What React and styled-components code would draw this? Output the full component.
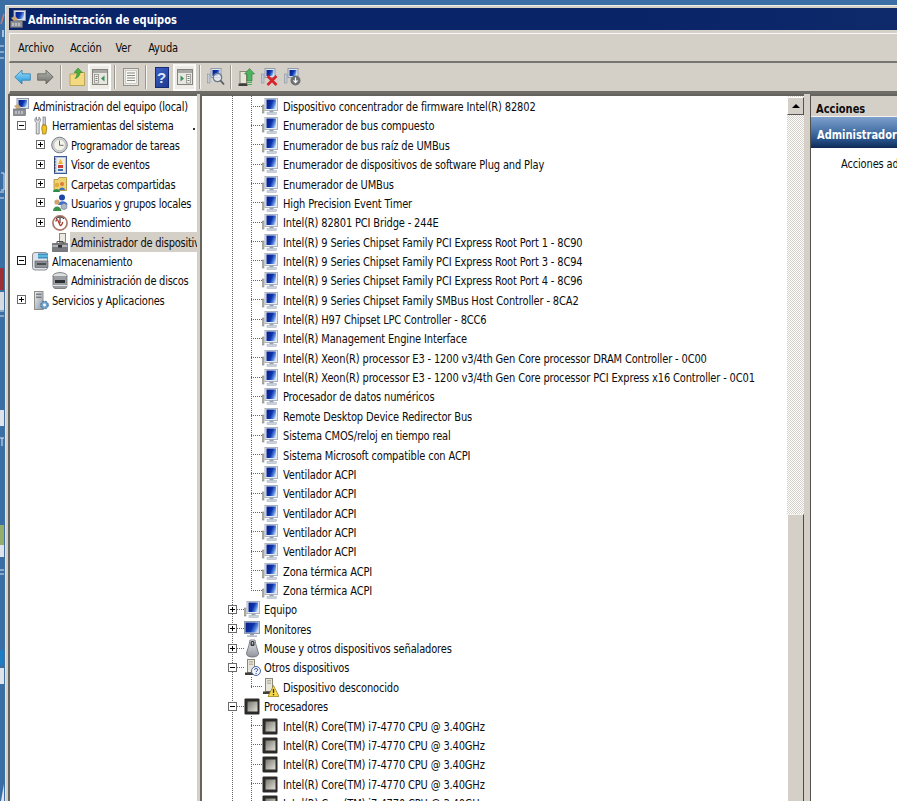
import React from "react";
import styled, { createGlobalStyle, css } from "styled-components";

const FONT = `"DejaVu Sans Condensed", "DejaVu Sans", "Liberation Sans", sans-serif`;
const ROW = "19.365px";

const Global = createGlobalStyle`
  html, body { margin: 0; padding: 0; background: #3b6ea5; }
  body { font-family: ${FONT}; font-size: 11px; color: #0c0c0c; overflow: hidden; }
`;

const tall = css`
  display: inline-block;
  font-size: 11px;
  line-height: 14px;
  letter-spacing: -0.15px;
  transform: translateY(1.5px) scaleY(1.16);
`;

const Page = styled.div`
  display: flex;
  width: 897px;
  height: 801px;
  overflow: hidden;
  background: #3b6ea5;
`;
const DesktopEdge = styled.svg`
  flex: none;
  width: 5px;
  height: 801px;
`;
const Win = styled.div`
  flex: 1;
  min-width: 0;
  margin-top: 5px;
  display: flex;
  flex-direction: column;
  background: #d4d0c8;
  border-top: 1px solid #f2f1ec;
  border-left: 1px solid #e8e6e0;
`;
const TitleBar = styled.div`
  flex: none;
  height: 22px;
  margin-top: 2px;
  margin-left: 3px;
  display: flex;
  align-items: center;
  gap: 2px;
  padding-left: 1px;
  background: linear-gradient(90deg, #0a246a, #0a2468 70%, #0e2a6a);
  color: #fff;
`;
const TitleText = styled.span`
  ${tall}
  letter-spacing: 0;
  font-weight: 700;
`;
const MenuBar = styled.div`
  flex: none;
  height: 27px;
  margin-top: 3px;
  margin-left: 3px;
  display: flex;
  align-items: center;
  padding-left: 8px;
  border-top: 1px solid #fbfaf7;
  border-left: 1px solid #f4f3ef;
  border-bottom: 2px solid #77756f;
`;
const MenuItem = styled.span`
  ${tall}
  transform: translateY(0.5px) scaleY(1.16);
  margin-right: ${(p) => p.$gap}px;
`;
const ToolBar = styled.div`
  flex: none;
  height: 28px;
  margin-left: 3px;
  display: flex;
  align-items: center;
  padding-left: 1px;
  border-left: 1px solid #f4f3ef;
  border-bottom: 3px solid #6f6d68;
`;
const ToolBtn = styled.div`
  flex: none;
  width: 23px;
  height: 27px;
  display: flex;
  align-items: center;
  justify-content: center;
  box-sizing: border-box;
  ${(p) => p.$on && `background:#ecebe6; border:2px solid #fbfbf9; border-top-color:#f7f7f3;`}
`;
const ToolSep = styled.div`
  flex: none;
  width: 1px;
  height: 24px;
  margin: 0 4px 0 3px;
  background: #9a9892;
  box-shadow: 1px 0 0 #f6f5f1;
`;
const Panes = styled.div`
  flex: 1;
  min-height: 0;
  display: flex;
  padding-left: 2px;
`;
const TreePane = styled.div`
  flex: none;
  width: 187px;
  overflow: hidden;
  padding-top: 0.4px;
  background: #fff;
  border-left: 2px solid #66645f;
  border-top: 2px solid #66645f;
`;
const CenterPane = styled.div`
  flex: none;
  width: 602px;
  margin-left: 3px;
  display: flex;
  overflow: hidden;
  background: #fff;
  border-left: 2px solid #66645f;
  border-top: 2px solid #66645f;
`;
const DeviceList = styled.div`
  flex: 1;
  min-width: 0;
  height: 720px;
  padding-top: 0.4px;
  background-image: repeating-linear-gradient(180deg, #666 0 1px, transparent 1px 2px);
  background-size: 1px 100%;
  background-position: 30px 0;
  background-repeat: no-repeat;
`;
const Children = styled.div`
  background-image: repeating-linear-gradient(180deg, #666 0 1px, transparent 1px 2px);
  background-size: 1px calc(100% - 9px);
  background-position: 49px 0;
  background-repeat: no-repeat;
`;
const Row = styled.div`
  display: flex;
  align-items: center;
  height: ${ROW};
  padding-left: ${(p) => p.$pad}px;
  white-space: nowrap;
`;
const Expander = styled.span`
  flex: none;
  box-sizing: border-box;
  width: 9px;
  height: 9px;
  position: relative;
  background: #fff;
  border: 1px solid ${(p) => (p.$strong ? "#222" : "#6b6b6b")};
  &::before {
    content: "";
    position: absolute;
    left: 1px;
    right: 1px;
    top: 3px;
    height: 1px;
    background: #000;
  }
  &::after {
    content: "";
    display: ${(p) => (p.$open ? "none" : "block")};
    position: absolute;
    top: 1px;
    bottom: 1px;
    left: 3px;
    width: 1px;
    background: #000;
  }
`;
const Stub = styled.span`
  flex: none;
  width: ${(p) => p.$w}px;
  height: 1px;
  background-image: repeating-linear-gradient(90deg, #666 0 1px, transparent 1px 2px);
`;
const IconSlot = styled.span`
  flex: none;
  width: ${(p) => p.$w}px;
  display: flex;
  justify-content: center;
  padding-top: 1px;
`;
const Glyph = styled.svg`
  flex: none;
  display: block;
`;
const Label = styled.span`
  ${tall}
  margin-left: ${(p) => p.$gap ?? 4}px;
`;
const TreeLabel = styled(Label)`
  letter-spacing: -0.25px;
`;
const SelLabel = styled.span`
  flex: 1;
  min-width: 0;
  overflow: hidden;
  margin-left: 3px;
  height: 20px;
  display: flex;
  align-items: center;
  padding-left: 1px;
  background: #d4d0c8;
`;
const SelText = styled.span`
  ${tall}
  letter-spacing: -0.25px;
`;
const Spacer = styled.span`
  flex: none;
  width: ${(p) => p.$w}px;
`;
const StrayDot = styled.span`
  flex: none;
  width: 2px;
  height: 2px;
  margin: 8px 2px 0 auto;
  background: #333;
`;
const ScrollBar = styled.div`
  flex: none;
  width: 17px;
  display: flex;
  flex-direction: column;
  background-color: #fff;
  background-image: conic-gradient(#d4d0c8 25%, #fff 0 50%, #d4d0c8 0 75%, #fff 0);
  background-size: 2px 2px;
`;
const ScrollUp = styled.div`
  flex: none;
  height: 18px;
  margin-top: 1px;
  display: flex;
  align-items: center;
  justify-content: center;
  background: #d4d0c8;
  box-sizing: border-box;
  border: 1px solid #fff;
  border-right-color: #55534f;
  border-bottom-color: #55534f;
  &::before {
    content: "";
    border: 4px solid transparent;
    border-top: 0;
    border-bottom: 4px solid #000;
  }
`;
const ScrollGap = styled.div`
  flex: none;
  height: 399px;
`;
const ScrollThumb = styled.div`
  flex: 1;
  background: #d4d0c8;
  box-sizing: border-box;
  border-left: 1px solid #fff;
  border-top: 1px solid #f2f1ec;
  border-right: 1px solid #4b4a47;
`;
const ActionsPane = styled.div`
  flex: 1;
  min-width: 0;
  margin-left: 6px;
  overflow: hidden;
  background: #fff;
  border-left: 1px solid #55534f;
  border-top: 2px solid #66645f;
`;
const ActionsHead = styled.div`
  box-sizing: border-box;
  height: 21px;
  display: flex;
  align-items: center;
  padding: 4px 0 0 5px;
  background: #d4d0c8;
  border-bottom: 1px solid #f4f3ef;
`;
const BoldText = styled.span`
  ${tall}
  letter-spacing: 0;
  font-weight: 700;
`;
const ActionsBand = styled.div`
  box-sizing: border-box;
  height: 31px;
  display: flex;
  align-items: center;
  padding: 2px 0 0 6px;
  white-space: nowrap;
  color: #fff;
  background: linear-gradient(180deg, #7ea0cc 0%, #4f79ac 40%, #264f86 75%, #0d2a55 100%);
`;
const ActionsNote = styled.div`
  padding: 8px 0 0 30px;
  white-space: nowrap;
`;
const NoteText = styled.span`
  ${tall}
`;
const HelpBox = styled.div`
  width: 14px;
  height: 21px;
  background: linear-gradient(135deg, #3c61c4, #1d3a92);
  border: 1px solid #152c72;
  box-sizing: border-box;
  color: #dfe7ff;
  font: 700 15px/19px "Liberation Sans", sans-serif;
  text-align: center;
`;

const Icon = ({ w = 16, h = 16, children }) => (
  <Glyph width={w} height={h} viewBox={`0 0 ${w} ${h}`}>
    {children}
  </Glyph>
);

const Defs = () => (
  <svg width="0" height="0" style={{ position: "absolute" }}>
    <defs>
      <linearGradient id="scr" x1="0" y1="0.3" x2="1" y2="0.7">
        <stop offset="0" stopColor="#0a1f8c" />
        <stop offset="0.5" stopColor="#0d35ac" />
        <stop offset="0.8" stopColor="#5c8ce0" />
        <stop offset="1" stopColor="#cfe0f8" />
      </linearGradient>
      <linearGradient id="arrowBlue" x1="0" y1="0" x2="0" y2="1">
        <stop offset="0" stopColor="#9fe0fb" />
        <stop offset="1" stopColor="#1f93d8" />
      </linearGradient>
      <linearGradient id="arrowGray" x1="0" y1="0" x2="0" y2="1">
        <stop offset="0" stopColor="#b5b5b0" />
        <stop offset="1" stopColor="#6f6f6c" />
      </linearGradient>
      <linearGradient id="chip" x1="0" y1="0" x2="1" y2="1">
        <stop offset="0" stopColor="#77776f" />
        <stop offset="1" stopColor="#e2e2dc" />
      </linearGradient>
      <linearGradient id="metal" x1="0" y1="0" x2="0" y2="1">
        <stop offset="0" stopColor="#e4e6ea" />
        <stop offset="1" stopColor="#8f949c" />
      </linearGradient>
      <linearGradient id="tower" x1="0" y1="0" x2="1" y2="1">
        <stop offset="0" stopColor="#eef0f3" />
        <stop offset="1" stopColor="#8d97a6" />
      </linearGradient>
    </defs>
  </svg>
);

const Monitor = () => (
  <Icon w={16} h={17}>
    <rect x="0" y="7" width="2" height="8" fill="#bfb9a4" stroke="#6f7580" strokeWidth=".5" />
    <rect x="3" y="0.500" width="12.500" height="12" fill="#e8ebf0" stroke="#aab3c1" />
    <rect x="4.500" y="1.500" width="9.500" height="9.500" fill="url(#scr)" />
    <rect x="7.500" y="12.500" width="4" height="2" fill="#98a2b2" />
    <rect x="5" y="14.500" width="9.500" height="2" fill="#ccd3dd" stroke="#a5aebb" strokeWidth=".5" />
  </Icon>
);
const BigMonitor = () => (
  <Icon w={16} h={16}>
    <rect x="0.500" y="0.500" width="15" height="12" fill="#cfd5de" stroke="#8f9bab" />
    <rect x="1.500" y="1.500" width="13" height="10" fill="url(#scr)" />
    <rect x="6" y="12.500" width="4" height="2" fill="#8e98a8" />
    <rect x="3" y="14.300" width="10" height="1.700" fill="#b9c0cc" />
  </Icon>
);
const Chip = () => (
  <Icon w={16} h={17}>
    <rect x="0.500" y="0.500" width="15" height="16" rx="1" fill="#2b2a28" />
    <rect x="3.500" y="3.500" width="10" height="10" fill="url(#chip)" />
  </Icon>
);
const MouseDev = () => (
  <Icon w={15} h={19}>
    <path d="M5 1h5l1 5 2.500 8c.3 2.500-2 4-6 4s-6.300-1.500-6-4L4 6z" fill="url(#metal)" stroke="#666a70" strokeWidth=".8" />
    <rect x="5.500" y="2" width="4" height="5" rx="1.500" fill="#2e2f33" />
    <rect x="6.800" y="3" width="1.400" height="2.500" fill="#bfc3c8" />
  </Icon>
);
const Tower = () => (
  <g>
    <rect x="3.500" y="0.500" width="7" height="13" fill="#e8e6da" stroke="#8a8878" />
    <rect x="5" y="2" width="4" height="1.500" fill="#b8b5a4" />
    <rect x="5" y="4.500" width="4" height="1.500" fill="#b8b5a4" />
    <rect x="1" y="13.500" width="9" height="2.500" fill="#3f3e3a" />
  </g>
);
const UnknownDev = () => (
  <Icon w={17} h={17}>
    <Tower />
    <circle cx="12" cy="12" r="4.500" fill="#f5f6fa" stroke="#4a62a8" />
    <path d="M10.400 10.800c.3-1.700 3.400-1.700 3.300 0 0 1.200-1.600 1.100-1.600 2.300M12.100 14.100v.9" stroke="#1c3f9c" strokeWidth="1" fill="none" />
  </Icon>
);
const WarnDev = () => (
  <Icon w={17} h={19}>
    <Tower />
    <path d="M11.500 7.500L17 18.500H6z" fill="#f7d84a" stroke="#9c8420" strokeWidth=".8" />
    <path d="M11.500 11v4M11.500 16v1.300" stroke="#2b2b20" strokeWidth="1.300" />
  </Icon>
);

const ConsoleRoot = () => (
  <Icon w={16} h={18}>
    <rect x="4" y="0.500" width="11.500" height="10" fill="#dde2ea" stroke="#8f9bab" />
    <rect x="5.500" y="2" width="8.500" height="7" fill="url(#scr)" />
    <path d="M1 8l4-2 3 3-3 3z" fill="#c9aa7a" />
    <rect x="0.500" y="11" width="12" height="6.500" fill="#8d9096" stroke="#5f6166" strokeWidth=".6" />
    <path d="M3 13v3M6 13v3M9 13v3" stroke="#e6e6e6" />
  </Icon>
);
const Tools = () => (
  <Icon w={14} h={19}>
    <path d="M2.500 1c-2.200 1.500-2 4.500-.3 5.500V18h3V6.500c1.700-1 1.900-4 -.3-5.500V4H2.500z" fill="#d9dbde" stroke="#6b6e72" strokeWidth=".7" />
    <rect x="9" y="1" width="2.500" height="8" fill="#c9ccd0" stroke="#6b6e72" strokeWidth=".6" />
    <path d="M8.500 9h3.500l.8 3-1 6H8.700l-1-6z" fill="#f2c21f" stroke="#8d6d08" strokeWidth=".7" />
  </Icon>
);
const Clock = () => (
  <Icon w={17} h={18}>
    <circle cx="8.500" cy="9" r="7.800" fill="#cfd2d6" stroke="#7c7f84" />
    <circle cx="8.500" cy="9" r="5.800" fill="#f4f3ea" stroke="#a7a9ad" strokeWidth=".6" />
    <path d="M8.500 4.500V9.300H12.500" stroke="#6a6c70" strokeWidth="1" fill="none" />
  </Icon>
);
const EventLog = () => (
  <Icon w={14} h={18}>
    <rect x="1.500" y="0.500" width="12" height="17" fill="#b9c7e0" stroke="#3f5a94" />
    <rect x="3.500" y="2" width="8.500" height="14" fill="#f0eee6" />
    <path d="M7.500 3l2.500 5h-5z" fill="#e9b934" />
    <rect x="5" y="9" width="5" height="3" fill="#c54036" />
    <rect x="5" y="13" width="5" height="2" fill="#3a6fb0" />
    <path d="M1 3h1.500M1 6h1.500M1 9h1.500M1 12h1.500M1 15h1.500" stroke="#222" />
  </Icon>
);
const SharedFolder = () => (
  <Icon w={16} h={18}>
    <path d="M2 4.500h4l1-2h7.500v13H2z" fill="#efd272" stroke="#a98a2c" strokeWidth=".8" />
    <circle cx="5" cy="10" r="2.200" fill="#e3a93b" />
    <path d="M1 17c0-4 7-4 7 0z" fill="#2c8c4a" />
    <circle cx="10" cy="9" r="2" fill="#d97b3a" />
    <path d="M7 15c0-3.500 6-3.500 6 0z" fill="#3f74b8" />
  </Icon>
);
const Users = () => (
  <Icon w={16} h={18}>
    <circle cx="10" cy="3.500" r="3" fill="#1f46a6" />
    <path d="M6 11c0-5 9-5 9.500 0z" fill="#3a6fd0" />
    <circle cx="5" cy="8" r="2.600" fill="#d0a270" />
    <path d="M1 17c0-6 8-6 8.500 0z" fill="#3d8f4d" />
    <circle cx="12" cy="12.500" r="3" fill="#aeb9c7" stroke="#6b7686" strokeWidth=".6" />
  </Icon>
);
const Perf = () => (
  <Icon w={16} h={18}>
    <circle cx="8" cy="9" r="7.100" fill="#fff" stroke="#a9766a" strokeWidth="1.700" />
    <path d="M3.800 7.500c1-4 2.500-1 3.500 2s2 3 3.500-1.500" stroke="#b1301f" strokeWidth="1.300" fill="none" />
    <path d="M4 5c2-2.500 6-2.500 8 0M8 4v5" stroke="#1f1f1f" strokeWidth="1" fill="none" />
  </Icon>
);
const DevMgr = () => (
  <Icon w={16} h={19}>
    <rect x="7.500" y="0.500" width="6" height="9" fill="#eceae0" stroke="#8a8878" />
    <path d="M0.500 10.500h15v8h-15z" fill="#777b80" stroke="#47494c" strokeWidth=".6" />
    <path d="M0.500 13h15" stroke="#d7d9dc" strokeWidth="1.200" />
    <rect x="6" y="12" width="4" height="2.500" fill="#2f3033" />
    <path d="M5 10.500V8.500h6v2" fill="none" stroke="#47494c" />
  </Icon>
);
const Storage = () => (
  <Icon w={17} h={19}>
    <rect x="0.500" y="0.500" width="15" height="17.500" rx="2.500" fill="#dfe2e6" stroke="#8a8e94" />
    <rect x="6" y="1.500" width="10" height="5" fill="#3c8fc4" />
    <path d="M6 4h10" stroke="#7fe0e8" />
    <rect x="3" y="9" width="13" height="6.500" fill="#8d9298" stroke="#55585c" strokeWidth=".6" />
    <path d="M5 12h9" stroke="#2e3033" strokeWidth="1.400" />
  </Icon>
);
const Disk = () => (
  <Icon w={16} h={17}>
    <ellipse cx="8" cy="3.800" rx="7" ry="3.200" fill="#dcdedf" stroke="#7e8185" />
    <path d="M1 4v9.500c0 1.500 1 3 2 3h10c1 0 2-1.500 2-3V4" fill="#9a9da1" stroke="#5f6266" strokeWidth=".7" />
    <rect x="3" y="8" width="10" height="3" fill="#2f3033" />
    <path d="M1 13.500h14" stroke="#e3e4e6" />
  </Icon>
);
const Services = () => (
  <Icon w={16} h={19}>
    <rect x="1.500" y="0.500" width="8.500" height="18" fill="url(#tower)" stroke="#8f8f88" />
    <rect x="3" y="2.500" width="5.500" height="1.600" fill="#7b7d80" />
    <rect x="3" y="5.500" width="5.500" height="1.600" fill="#7b7d80" />
    <circle cx="11.500" cy="14" r="3.800" fill="#6fa4cf" stroke="#3f6c92" strokeDasharray="2 1" />
    <circle cx="11.500" cy="14" r="1.400" fill="#fff" />
  </Icon>
);

const BackArrow = () => (
  <Icon w={17} h={16}>
    <path d="M0.800 8L8 1v3.800h8.300v6.400H8V15z" fill="url(#arrowBlue)" stroke="#2f7fb3" strokeWidth=".8" />
  </Icon>
);
const FwdArrow = () => (
  <Icon w={17} h={16}>
    <path d="M16.200 8L9 1v3.800H.7v6.400H9V15z" fill="url(#arrowGray)" stroke="#5f5f5c" strokeWidth=".8" />
  </Icon>
);
const UpFolder = () => (
  <Icon w={16} h={18}>
    <path d="M1 6h5l1-1.500h8.500V17.500H1z" fill="#f3da82" stroke="#b4983e" strokeWidth=".8" />
    <path d="M9 0l4.500 4.500h-2.500c0 3-2 5.500-5 6 1.500-1.500 2-3.500 1.700-6H5z" fill="#4cae3c" stroke="#2e7d28" strokeWidth=".5" />
  </Icon>
);
const PaneToggle = ({ side }) => (
  <Icon w={16} h={16}>
    <rect x="0.500" y="0.500" width="15" height="15" fill="#e7e6e0" stroke="#84837e" />
    <rect x="1" y="1" width="14" height="3" fill="#a8a8a4" />
    {side === "left" ? (
      <g>
        <rect x="2.500" y="5.500" width="4" height="8.500" fill="#f5f5f2" stroke="#84837e" strokeWidth=".7" />
        <path d="M3.500 7.500h2M3.500 9.500h2M3.500 11.500h2" stroke="#77766f" />
        <path d="M12.500 6.500v6l-3.500-3z" fill="#3a8f55" />
      </g>
    ) : (
      <g>
        <rect x="9.500" y="5.500" width="4" height="8.500" fill="#f5f5f2" stroke="#84837e" strokeWidth=".7" />
        <path d="M10.500 7.500h2M10.500 9.500h2M10.500 11.500h2" stroke="#77766f" />
        <path d="M3.500 6.500v6l3.500-3z" fill="#3a8f55" />
      </g>
    )}
  </Icon>
);
const Properties = () => (
  <Icon w={16} h={18}>
    <rect x="0.500" y="0.500" width="15" height="17" fill="#e7e6e0" stroke="#93928c" />
    <rect x="2.500" y="2.500" width="11" height="13" fill="#f7f7f4" stroke="#b4b3ad" strokeWidth=".6" />
    <path d="M4 5h8M4 7.500h8M4 10h8M4 12.500h8" stroke="#8b8b85" />
  </Icon>
);
const Scan = () => (
  <Icon w={18} h={18}>
    <rect x="0.500" y="6" width="2.500" height="9" fill="#c4cad3" stroke="#7c8694" strokeWidth=".5" />
    <rect x="4" y="0.500" width="10" height="9" fill="#dfe3ea" stroke="#8f9bab" />
    <rect x="5.500" y="2" width="7" height="6" fill="url(#scr)" />
    <circle cx="10.500" cy="9.500" r="4.200" fill="#e8eef7" fillOpacity=".7" stroke="#6b7686" strokeWidth="1.200" />
    <path d="M13.500 12.500l3.500 4" stroke="#565b63" strokeWidth="1.800" />
  </Icon>
);
const UpdateDrv = () => (
  <Icon w={17} h={19}>
    <rect x="2" y="3.500" width="6.500" height="12" fill="#e8e6da" stroke="#8a8878" />
    <rect x="0.500" y="15.500" width="9" height="2.500" fill="#3f3e3a" />
    <path d="M11.500 0.500L16.500 6H14v7H9V6H6.500z" fill="#4fb45f" stroke="#2d7a3b" strokeWidth=".6" />
    <path d="M9 14.500h5M9 16.500h5" stroke="#4fb45f" />
  </Icon>
);
const Disable = () => (
  <Icon w={18} h={18}>
    <rect x="0.500" y="6" width="2.500" height="9" fill="#c4cad3" stroke="#7c8694" strokeWidth=".5" />
    <rect x="4" y="0.500" width="10" height="9" fill="#dfe3ea" stroke="#8f9bab" />
    <rect x="5.500" y="2" width="7" height="6" fill="url(#scr)" />
    <path d="M6.500 8l9 9M15.500 8l-9 9" stroke="#d8232a" strokeWidth="2.600" />
  </Icon>
);
const Uninstall = () => (
  <Icon w={18} h={18}>
    <rect x="0.500" y="6" width="2.500" height="9" fill="#c4cad3" stroke="#7c8694" strokeWidth=".5" />
    <rect x="4" y="0.500" width="10" height="9" fill="#dfe3ea" stroke="#8f9bab" />
    <rect x="5.500" y="2" width="7" height="6" fill="url(#scr)" />
    <circle cx="11.500" cy="12.500" r="5" fill="#6d7074" />
    <path d="M11.500 9.500v4.500M9.500 12.300l2 2.300 2-2.300" stroke="#fff" strokeWidth="1.200" fill="none" />
  </Icon>
);

const Leaf = ({ icon, children }) => (
  <Row $pad={49}>
    <Stub $w={11} />
    <IconSlot $w={16}>{icon}</IconSlot>
    <Label $gap={5}>{children}</Label>
  </Row>
);
const Group = ({ icon, open, children }) => (
  <Row $pad={26}>
    <Expander $open={open} />
    <Stub $w={7} />
    <IconSlot $w={16}>{icon}</IconSlot>
    <Label $gap={4}>{children}</Label>
  </Row>
);
const TreeRow = ({ level, open, leaf, icon, children, dot, selected }) => (
  <Row $pad={level === 0 ? 3 : level === 1 ? 7 : 26}>
    {level > 0 && (leaf ? <Spacer $w={9} /> : <Expander $open={open} $strong={open === "strong"} />)}
    {level > 0 && <Spacer $w={7} />}
    <IconSlot $w={level === 0 ? 16 : 15}>{icon}</IconSlot>
    {selected ? (
      <SelLabel>
        <SelText>{children}</SelText>
      </SelLabel>
    ) : (
      <TreeLabel $gap={4}>{children}</TreeLabel>
    )}
    {dot && <StrayDot />}
  </Row>
);

const system = [
  "Dispositivo concentrador de firmware Intel(R) 82802",
  "Enumerador de bus compuesto",
  "Enumerador de bus raíz de UMBus",
  "Enumerador de dispositivos de software Plug and Play",
  "Enumerador de UMBus",
  "High Precision Event Timer",
  "Intel(R) 82801 PCI Bridge - 244E",
  "Intel(R) 9 Series Chipset Family PCI Express Root Port 1 - 8C90",
  "Intel(R) 9 Series Chipset Family PCI Express Root Port 3 - 8C94",
  "Intel(R) 9 Series Chipset Family PCI Express Root Port 4 - 8C96",
  "Intel(R) 9 Series Chipset Family SMBus Host Controller - 8CA2",
  "Intel(R) H97 Chipset LPC Controller - 8CC6",
  "Intel(R) Management Engine Interface",
  "Intel(R) Xeon(R) processor E3 - 1200 v3/4th Gen Core processor DRAM Controller - 0C00",
  "Intel(R) Xeon(R) processor E3 - 1200 v3/4th Gen Core processor PCI Express x16 Controller - 0C01",
  "Procesador de datos numéricos",
  "Remote Desktop Device Redirector Bus",
  "Sistema CMOS/reloj en tiempo real",
  "Sistema Microsoft compatible con ACPI",
  "Ventilador ACPI",
  "Ventilador ACPI",
  "Ventilador ACPI",
  "Ventilador ACPI",
  "Ventilador ACPI",
  "Zona térmica ACPI",
  "Zona térmica ACPI",
];
const CPU = "Intel(R) Core(TM) i7-4770 CPU @ 3.40GHz";

export default function App() {
  return (
    <>
      <Global />
      <Defs />
      <Page>
        <DesktopEdge viewBox="0 0 5 801">
          <path d="M4 14L1 24" stroke="#c77b6f" strokeWidth="1.500" />
          <path d="M3 30v7" stroke="#d9dee4" strokeWidth="1.500" />
          <path d="M0 46h4M0 52h4M0 58h4" stroke="#d9e1ea" />
          <path d="M1 173h3v17H1" fill="none" stroke="#d9e1ea" />
          <path d="M0 192h4M0 198h4" stroke="#d9e1ea" />
          <rect x="0" y="268" width="4" height="22" fill="#9c2f35" />
          <rect x="0" y="292" width="4" height="18" fill="#d6dbe0" />
          <path d="M0 311h4M0 316h4" stroke="#d9e1ea" />
          <rect x="0" y="410" width="4" height="16" fill="#dfe4ea" />
          <path d="M0 438h4M2 438v8" stroke="#e3e8ee" />
          <rect x="0" y="525" width="4" height="20" fill="#94ac6c" />
          <rect x="0" y="545" width="4" height="12" fill="#dfe4ea" />
          <path d="M0 570h4M0 574h4" stroke="#d9e1ea" />
          <rect x="0" y="650" width="4" height="15" fill="#1e7dc0" />
          <rect x="0" y="668" width="4" height="16" fill="#dfe4ea" />
          <path d="M4 784l-3 17h3z" fill="#dfe4ea" />
        </DesktopEdge>
        <Win>
          <TitleBar>
            <ConsoleRoot />
            <TitleText>Administración de equipos</TitleText>
          </TitleBar>
          <MenuBar>
            <MenuItem $gap={16}>Archivo</MenuItem>
            <MenuItem $gap={14}>Acción</MenuItem>
            <MenuItem $gap={17}>Ver</MenuItem>
            <MenuItem $gap={0}>Ayuda</MenuItem>
          </MenuBar>
          <ToolBar>
            <ToolBtn><BackArrow /></ToolBtn>
            <ToolBtn><FwdArrow /></ToolBtn>
            <ToolSep />
            <ToolBtn><UpFolder /></ToolBtn>
            <ToolBtn $on><PaneToggle side="left" /></ToolBtn>
            <ToolSep />
            <ToolBtn><Properties /></ToolBtn>
            <ToolSep />
            <ToolBtn><HelpBox>?</HelpBox></ToolBtn>
            <ToolBtn $on><PaneToggle side="right" /></ToolBtn>
            <ToolSep />
            <ToolBtn><Scan /></ToolBtn>
            <ToolSep />
            <ToolBtn><UpdateDrv /></ToolBtn>
            <ToolBtn><Disable /></ToolBtn>
            <ToolBtn><Uninstall /></ToolBtn>
          </ToolBar>
          <Panes>
            <TreePane>
              <TreeRow level={0} icon={<ConsoleRoot />}>Administración del equipo (local)</TreeRow>
              <TreeRow level={1} open icon={<Tools />} dot>Herramientas del sistema</TreeRow>
              <TreeRow level={2} icon={<Clock />}>Programador de tareas</TreeRow>
              <TreeRow level={2} icon={<EventLog />}>Visor de eventos</TreeRow>
              <TreeRow level={2} icon={<SharedFolder />}>Carpetas compartidas</TreeRow>
              <TreeRow level={2} icon={<Users />}>Usuarios y grupos locales</TreeRow>
              <TreeRow level={2} icon={<Perf />}>Rendimiento</TreeRow>
              <TreeRow level={2} leaf selected icon={<DevMgr />}>Administrador de dispositivos</TreeRow>
              <TreeRow level={1} open="strong" icon={<Storage />}>Almacenamiento</TreeRow>
              <TreeRow level={2} leaf icon={<Disk />}>Administración de discos</TreeRow>
              <TreeRow level={1} icon={<Services />}>Servicios y Aplicaciones</TreeRow>
            </TreePane>
            <CenterPane>
              <DeviceList>
                <Children>
                  {system.map((t, i) => (
                    <Leaf key={i} icon={<Monitor />}>{t}</Leaf>
                  ))}
                </Children>
                <Group icon={<Monitor />}>Equipo</Group>
                <Group icon={<BigMonitor />}>Monitores</Group>
                <Group icon={<MouseDev />}>Mouse y otros dispositivos señaladores</Group>
                <Group open icon={<UnknownDev />}>Otros dispositivos</Group>
                <Children>
                  <Leaf icon={<WarnDev />}>Dispositivo desconocido</Leaf>
                </Children>
                <Group open icon={<Chip />}>Procesadores</Group>
                <Children>
                  {[0, 1, 2, 3, 4].map((i) => (
                    <Leaf key={i} icon={<Chip />}>{CPU}</Leaf>
                  ))}
                </Children>
              </DeviceList>
              <ScrollBar>
                <ScrollUp />
                <ScrollGap />
                <ScrollThumb />
              </ScrollBar>
            </CenterPane>
            <ActionsPane>
              <ActionsHead>
                <BoldText>Acciones</BoldText>
              </ActionsHead>
              <ActionsBand>
                <BoldText>Administrador de dispositivos</BoldText>
              </ActionsBand>
              <ActionsNote>
                <NoteText>Acciones adicionales</NoteText>
              </ActionsNote>
            </ActionsPane>
          </Panes>
        </Win>
      </Page>
    </>
  );
}
